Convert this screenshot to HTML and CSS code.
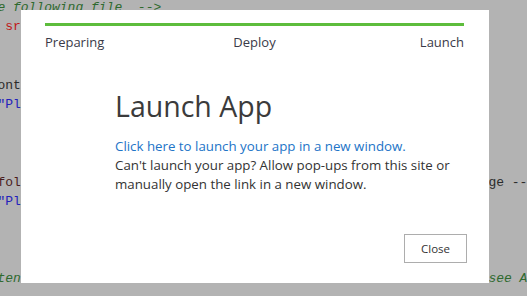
FILE: index.html
```html
<!DOCTYPE html>
<html lang="en">
<head>
    <meta charset="UTF-8">
    <title>Launch App</title>
    <link rel="stylesheet" href="styles.css">
</head>
<body>

    <div class="editor">
        <div class="line"><span class="comment">e following file  --&gt;</span></div>
        <div class="line"><span class="tag"> sr</span></div>
        <div class="line"></div>
        <div class="line"></div>
        <div class="line"><span class="plain">ont</span></div>
        <div class="line"><span class="string">"Pl</span></div>
        <div class="line"></div>
        <div class="line"></div>
        <div class="line"></div>
        <div class="line"><span class="brown">fol</span><span class="plain">ge --</span></div>
        <div class="line"><span class="string">"Pl</span></div>
        <div class="line"></div>
        <div class="line"></div>
        <div class="line"></div>
        <div class="line"><span class="comment">ten</span><span class="comment">see A</span></div>
    </div>

    <div class="modal">
        <div class="steps">
            <div class="progress"></div>
            <div class="step-labels">
                <span>Preparing</span>
                <span>Deploy</span>
                <span class="last-step">Launch</span>
            </div>
        </div>

        <div class="modal-body">
            <h1>Launch App</h1>
            <p>
                <a href="#" class="launch-link">Click here to launch your app in a new window.</a><br>
                Can't launch your app? Allow pop-ups from this site or manually open the link in a new window.
            </p>
        </div>

        <div class="modal-footer">
            <button class="close-btn">Close</button>
        </div>
    </div>

</body>
</html>
```

FILE: styles.css
```css
body {
    margin: 0;
    padding: 0;
    width: 527px;
    height: 296px;
    overflow: hidden;
    background-color: #b3b3b3;
    position: relative;
}

.editor {
    margin: -2px 0 0 -2.6px;
    font-family: 'Liberation Mono', 'DejaVu Sans Mono', monospace;
    font-size: 13px;
    color: #2b2b2b;
}

.line {
    display: grid;
    grid-template-columns: 491px 1fr;
    height: 19.4px;
    line-height: 19.4px;
    white-space: pre;
}

.comment {
    color: #2f6a2f;
    font-style: italic;
}

.tag {
    color: #c01818;
}

.plain {
    color: #2b2b2b;
}

.brown {
    color: #4a1c1c;
}

.string {
    color: #2222bb;
}

.modal {
    position: absolute;
    left: 21px;
    top: 10px;
    width: 468px;
    height: 273px;
    box-sizing: border-box;
    padding: 13px 22px 20px 24px;
    background-color: #fff;
    display: flex;
    flex-direction: column;
    font-family: 'Open Sans', 'Noto Sans', sans-serif;
    color: #333;
}

.steps {
    margin-right: 3px;
}

.progress {
    height: 3px;
    background-color: #5dbd3c;
}

.step-labels {
    display: grid;
    grid-template-columns: 1fr auto 1fr;
    margin-top: 7px;
    font-size: 13px;
    line-height: 19px;
    color: #3a3a48;
}

.last-step {
    justify-self: end;
}

.modal-body {
    padding-left: 70px;
}

h1 {
    font-size: 28.5px;
    font-weight: normal;
    margin: 36px 0 0;
    line-height: 36px;
    color: #3b3b3b;
}

p {
    margin: 13px 0 0;
    font-size: 13.3px;
    line-height: 18.9px;
    color: #333;
}

.launch-link {
    color: #2274c7;
    text-decoration: none;
}

.modal-footer {
    margin-top: auto;
    display: flex;
    justify-content: flex-end;
}

.close-btn {
    width: 63px;
    height: 29px;
    font-family: 'Open Sans', 'Noto Sans', sans-serif;
    font-size: 11.5px;
    color: #333;
    background-color: #fff;
    border: 1px solid #adadad;
    padding: 0;
}
```
